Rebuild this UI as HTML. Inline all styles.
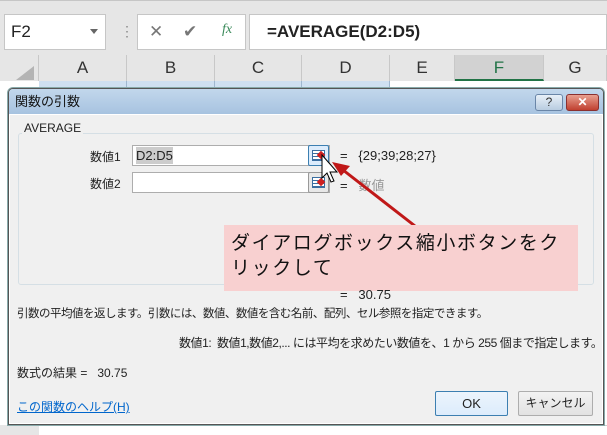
<!DOCTYPE html>
<html><head><meta charset="utf-8"><style>
*{margin:0;padding:0;box-sizing:border-box}
body{width:607px;height:435px;overflow:hidden;background:#fff;font-family:"Liberation Sans","Noto Sans CJK JP",sans-serif;position:relative;font-size:12px;color:#222}
.a{position:absolute;white-space:nowrap}
.hdr{position:absolute;top:55px;height:26px;border-right:1px solid #c8c8c8;background:#e6e6e6;text-align:center;font-size:17px;line-height:26px;color:#333}
.cell{position:absolute;top:81px;height:9px;border-right:1px solid #9fb7cf;background:#cfe0f1}
</style></head><body>
<div class="a" style="left:0;top:0;width:607px;height:55px;background:#e6e6e6;border-top:1px solid #c6c6c6"></div>
<div class="a" style="left:4px;top:14px;width:102px;height:36px;background:#fff;border:1px solid #c6c6c6;font-size:17px;line-height:34px;padding-left:6px">F2</div>
<div class="a" style="left:90px;top:29px;border:4px solid transparent;border-top:5px solid #666"></div>
<div class="a" style="left:120px;top:19px;font-size:14px;color:#888;line-height:24px">⋮</div>
<div class="a" style="left:137px;top:14px;width:109px;height:36px;background:#fff;border:1px solid #c6c6c6"></div>
<div class="a" style="left:149px;top:22px;font-size:17px;color:#777">✕</div>
<div class="a" style="left:183px;top:22px;font-size:17px;color:#777">✔</div>
<div class="a" style="left:222px;top:22px;font-size:14px;color:#3a8a5a;font-style:italic;font-family:'Liberation Serif',serif">fx</div>
<div class="a" style="left:249px;top:14px;width:358px;height:36px;background:#fff;border:1px solid #c6c6c6;font-size:17px;font-weight:bold;line-height:34px;padding-left:17px">=AVERAGE(D2:D5)</div>
<div class="hdr" style="left:0;width:39px"></div>
<div class="a" style="left:16px;top:66px;border-left:18px solid transparent;border-bottom:14px solid #b4b4b4"></div>
<div class="hdr" style="left:39px;width:88px">A</div>
<div class="hdr" style="left:127px;width:88px">B</div>
<div class="hdr" style="left:215px;width:87px">C</div>
<div class="hdr" style="left:302px;width:88px">D</div>
<div class="hdr" style="left:390px;width:65px">E</div>
<div class="hdr" style="left:455px;width:89px;background:#d2d2d2;color:#217346;border-bottom:2px solid #217346">F</div>
<div class="hdr" style="left:544px;width:63px">G</div>
<div class="cell" style="left:39px;width:88px"></div>
<div class="cell" style="left:127px;width:88px"></div>
<div class="cell" style="left:215px;width:87px"></div>
<div class="cell" style="left:302px;width:88px"></div>
<div class="a" style="left:0;top:425px;width:607px;height:10px;border-top:1px solid #ccc"></div>
<div class="a" style="left:0;top:425px;width:39px;height:10px;background:#e6e6e6"></div>
<div class="a" style="left:8px;top:88px;width:596px;height:337px;background:#f0f0f0;border:1px solid #555;border-radius:5px 5px 0 0;box-shadow:0 0 0 1px #8aa"></div>
<div class="a" style="left:9px;top:89px;width:594px;height:25px;background:linear-gradient(#c2d7ec,#a7c3e0);border-radius:4px 4px 0 0;font-size:13px;line-height:25px;padding-left:6px;color:#111">関数の引数</div>
<div class="a" style="left:535px;top:94px;width:28px;height:17px;border:1px solid #6a86a8;border-radius:3px;background:linear-gradient(#e8f0f8,#b8cce0);text-align:center;font-size:12px;line-height:15px;color:#333">?</div>
<div class="a" style="left:566px;top:94px;width:33px;height:17px;border:1px solid #8a3030;border-radius:3px;background:linear-gradient(#e8a090,#c04030);text-align:center;font-size:12px;line-height:15px;color:#fff;font-weight:bold">✕</div>
<div class="a" style="left:9px;top:114px;width:594px;height:310px;background:#f0f0f0;border:1px solid #fff"></div>
<div class="a" style="left:18px;top:133px;width:576px;height:152px;border:1px solid #d5dfe5;border-radius:3px"></div>
<div class="a" style="left:22px;top:121px;background:#f0f0f0;padding:0 2px;font-size:12px">AVERAGE</div>
<div class="a" style="left:90px;top:148px;font-size:12px">数値1</div>
<div class="a" style="left:90px;top:175px;font-size:12px">数値2</div>
<div class="a" style="left:132px;top:145px;width:198px;height:21px;background:#fff;border:1px solid #adadad"><span style="background:#ccc;font-size:13px;line-height:17px;display:inline-block;margin:1px 3px">D2:D5</span></div>
<div class="a" style="left:132px;top:172px;width:198px;height:21px;background:#fff;border:1px solid #adadad"></div>
<div class="a" style="left:308px;top:145px;width:21px;height:21px;border:1px solid #3c7fb1;border-radius:2px;background:#dcecfc"></div>
<div class="a" style="left:308px;top:172px;width:21px;height:21px;border:1px solid #999;border-radius:2px;background:#e8e8e8"></div>
<div class="a" style="left:312px;top:150px;width:13px;height:11px;border:1px solid #3b6ea0;background:repeating-linear-gradient(#fff 0 2px,#3b6ea0 2px 3px)"></div>
<div class="a" style="left:318px;top:152px;width:6px;height:6px;background:#d02020;transform:rotate(45deg)"></div>
<div class="a" style="left:312px;top:177px;width:13px;height:11px;border:1px solid #3b6ea0;background:repeating-linear-gradient(#fff 0 2px,#3b6ea0 2px 3px)"></div>
<div class="a" style="left:318px;top:179px;width:6px;height:6px;background:#d02020;transform:rotate(45deg)"></div>
<div class="a" style="left:340px;top:148px;font-size:13px">=&nbsp;&nbsp;&nbsp;{29;39;28;27}</div>
<div class="a" style="left:340px;top:175px;font-size:13px">= &nbsp;&nbsp;<span style="color:#999">数値</span></div>
<svg class="a" style="left:0;top:0" width="607" height="435">
<path d="M322 155 L322 178 L327 173 L331 182 L334 181 L330 172 L337 172 Z" fill="#fff" stroke="#000" stroke-width="1"/>
<line x1="415" y1="226" x2="343" y2="170" stroke="#c01818" stroke-width="3"/>
<path d="M332 162 L350 166 L341 176 Z" fill="#c01818"/>
</svg>
<div class="a" style="left:224px;top:225px;width:354px;height:66px;background:#f8d0d0;font-size:19px;line-height:25px;padding:6px 7px;color:#111;letter-spacing:1.6px">ダイアログボックス縮小ボタンをク<br>リックして</div>
<div class="a" style="left:340px;top:287px;font-size:13px">=&nbsp;&nbsp;&nbsp;30.75</div>
<div class="a" style="left:17px;top:305px;font-size:11.5px;letter-spacing:-0.5px">引数の平均値を返します。引数には、数値、数値を含む名前、配列、セル参照を指定できます。</div>
<div class="a" style="left:179px;top:334px;font-size:12px;letter-spacing:-0.45px">数値1:&nbsp;&nbsp;数値1,数値2,... には平均を求めたい数値を、1 から 255 個まで指定します。</div>
<div class="a" style="left:17px;top:364px;font-size:12px">数式の結果 =&nbsp;&nbsp;&nbsp;30.75</div>
<div class="a" style="left:17px;top:398px;font-size:12px;color:#0066cc;text-decoration:underline">この関数のヘルプ(H)</div>
<div class="a" style="left:435px;top:391px;width:73px;height:25px;border:1px solid #3c7fb1;border-radius:2px;background:linear-gradient(#ecf4fc,#dcecfc);text-align:center;line-height:23px;font-size:13px">OK</div>
<div class="a" style="left:518px;top:391px;width:75px;height:25px;border:1px solid #adadad;border-radius:2px;background:linear-gradient(#f2f2f2,#e2e2e2);text-align:center;line-height:23px;font-size:12px">キャンセル</div>
</body></html>
